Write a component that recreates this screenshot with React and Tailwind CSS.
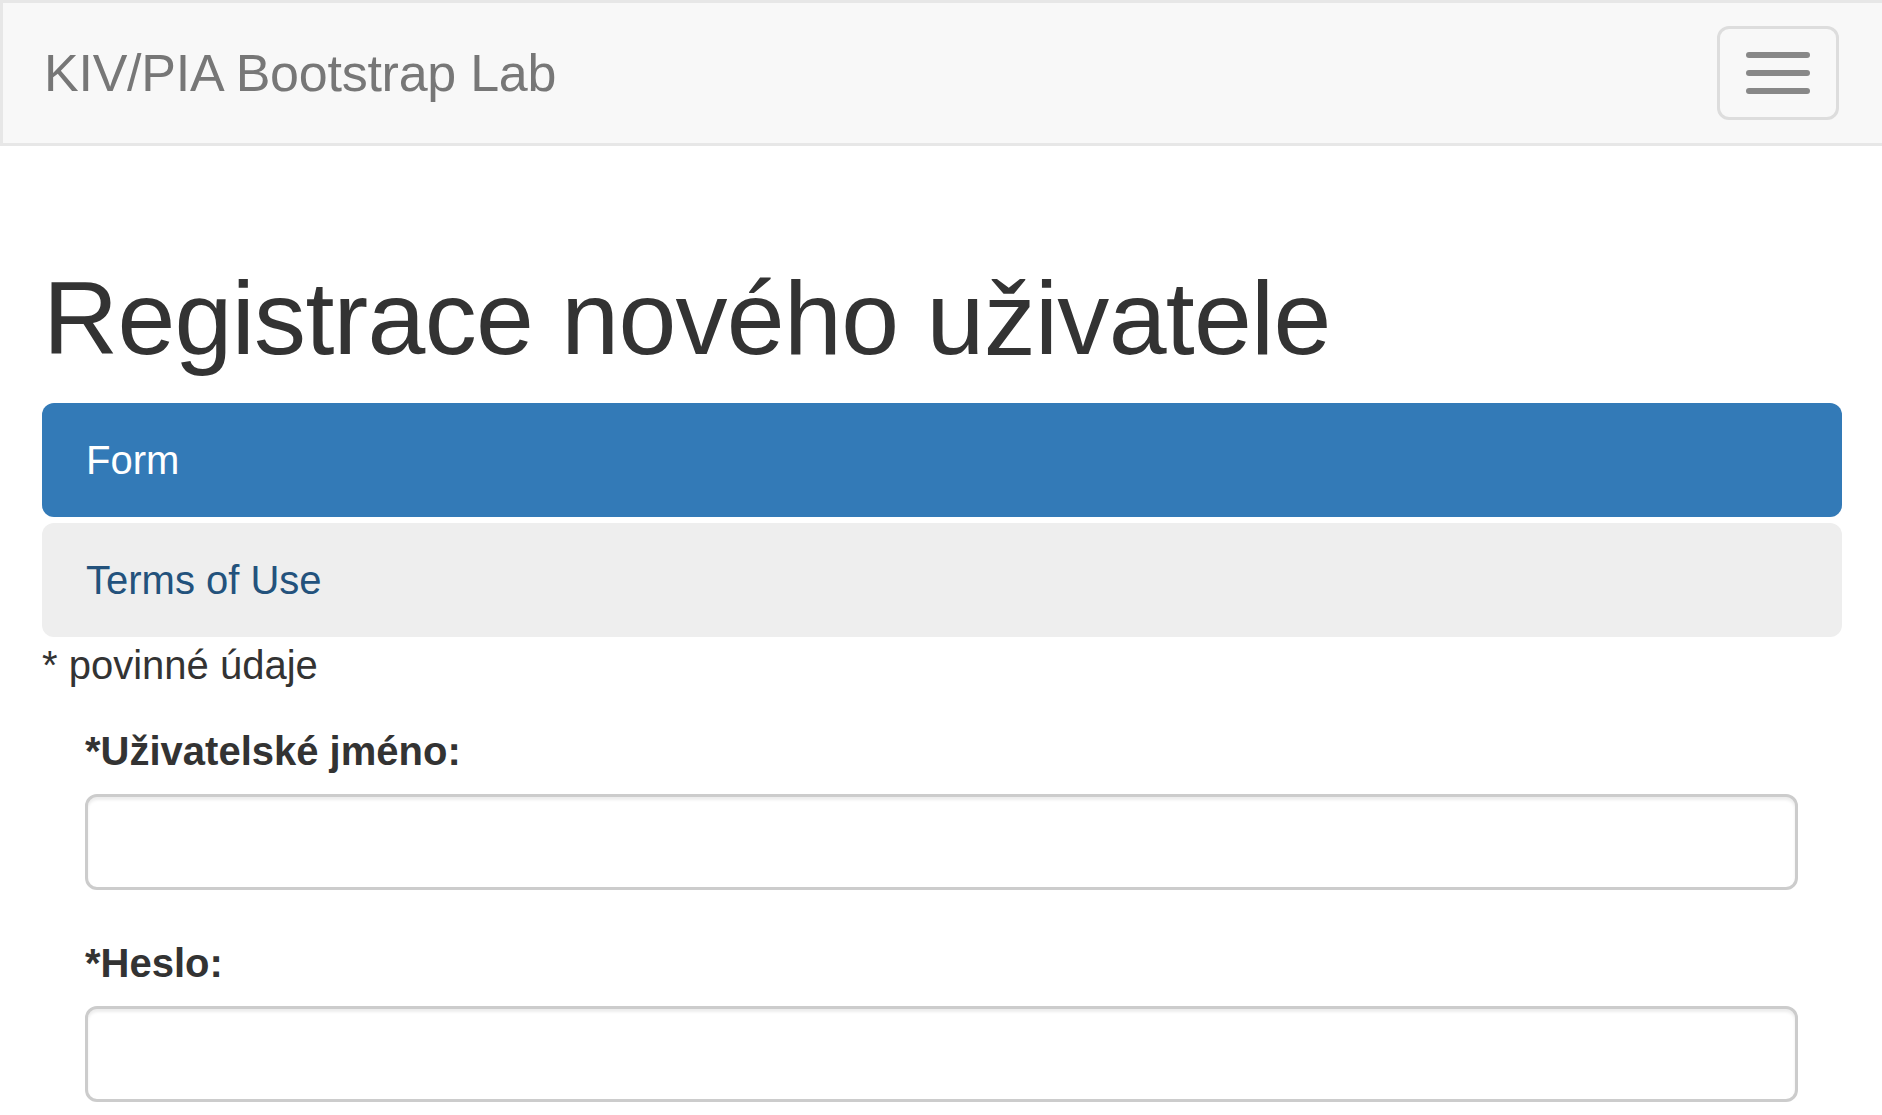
import React from "react";

const Navbar = () => (
  <div className="flex h-[146px] items-center justify-between border-y-[3px] border-l-[3px] border-[#e7e7e7] bg-[#f8f8f8] pl-[41px] pr-[43px]">
    <a className="text-[52px] leading-[58px] tracking-[-0.25px] text-[#777]" href="#">
      KIV/PIA Bootstrap Lab
    </a>
    <button
      type="button"
      className="flex h-[94px] w-[122px] flex-col items-center justify-center gap-[12px] rounded-[12px] border-[3px] border-[#ddd]"
    >
      <span className="block h-[6px] w-[64px] rounded-[3px] bg-[#888]" />
      <span className="block h-[6px] w-[64px] rounded-[3px] bg-[#888]" />
      <span className="block h-[6px] w-[64px] rounded-[3px] bg-[#888]" />
    </button>
  </div>
);

const Field = ({ label, type }) => (
  <div className="mb-[45px]">
    <label className="mb-[14px] block text-[40px] font-bold leading-[57px]">
      {label}
    </label>
    <input
      type={type}
      className="block h-[96px] w-full rounded-[12px] border-[3px] border-[#ccc] bg-white px-[35px] text-[40px] shadow-[inset_0_3px_3px_rgba(0,0,0,0.075)] outline-none"
    />
  </div>
);

export default function App() {
  return (
    <div className="min-h-screen bg-white font-['Liberation_Sans',Arial,sans-serif] text-[#333]">
      <Navbar />

      <div className="pl-[42px] pr-[40px]">
        <h1 className="mt-[115px] mb-[27px] pl-[1px] text-[104px] font-normal leading-[115px] tracking-[-0.7px]">
          Registrace nového uživatele
        </h1>

        {/* stacked pills */}
        <ul className="flex flex-col gap-[6px]">
          <li>
            <a
              href="#"
              className="block rounded-[12px] bg-[#337ab7] px-[44px] text-[40px] leading-[114px] text-white"
            >
              Form
            </a>
          </li>
          <li>
            <a
              href="#"
              className="block rounded-[12px] bg-[#eee] px-[44px] text-[40px] leading-[114px] text-[#23527c]"
            >
              Terms of Use
            </a>
          </li>
        </ul>

        <p className="text-[40px] leading-[57px]">* povinné údaje</p>

        <form className="mt-[29px] pl-[43px] pr-[44px]">
          <Field label="*Uživatelské jméno:" type="text" />
          <Field label="*Heslo:" type="password" />
        </form>
      </div>
    </div>
  );
}
